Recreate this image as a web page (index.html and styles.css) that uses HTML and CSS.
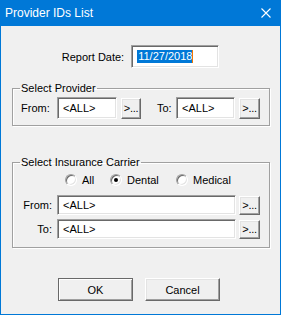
FILE: index.html
```html
<!DOCTYPE html>
<html lang="en">

<head>
    <meta charset="UTF-8">
    <title>Provider IDs List</title>
    <link rel="stylesheet" href="styles.css">
</head>

<body>
    <div class="window">
        <div class="titlebar">
            <span class="title">Provider IDs List</span>
            <svg class="close" width="10" height="10" viewBox="0 0 10 10">
                <path d="M0.5 0.5 L9.5 9.5 M9.5 0.5 L0.5 9.5" stroke="#fff" stroke-width="1.1" fill="none" />
            </svg>
        </div>

        <div class="report">
            <span>Report Date:</span>
            <div class="box date"><span class="sel">11/27/2018</span><span class="caret"></span></div>
        </div>

        <fieldset class="group g1">
            <legend>Select Provider</legend>
            <div class="row">
                <span class="lbl from">From:</span>
                <div class="box pick">&lt;ALL&gt;</div>
                <button class="dots">&gt;...</button>
                <span class="lbl to">To:</span>
                <div class="box pick2">&lt;ALL&gt;</div>
                <button class="dots dots2">&gt;...</button>
            </div>
        </fieldset>

        <fieldset class="group g2">
            <legend>Select Insurance Carrier</legend>
            <div class="radios">
                <label class="radio r-all"><span class="circle"></span>All</label>
                <label class="radio r-dental"><span class="circle on"></span>Dental</label>
                <label class="radio"><span class="circle"></span>Medical</label>
            </div>
            <div class="line">
                <span class="lbl2">From:</span>
                <div class="box wide">&lt;ALL&gt;</div>
                <button class="dots dots3">&gt;...</button>
            </div>
            <div class="line">
                <span class="lbl2">To:</span>
                <div class="box wide">&lt;ALL&gt;</div>
                <button class="dots dots3">&gt;...</button>
            </div>
        </fieldset>

        <div class="actions">
            <button class="btn default">OK</button>
            <button class="btn">Cancel</button>
        </div>
    </div>
</body>

</html>
```

FILE: styles.css
```css
html,
body {
    margin: 0;
    padding: 0;
}

body {
    font-family: "Liberation Sans", Arial, sans-serif;
    font-size: 11px;
    color: #000;
}

.window {
    width: 281px;
    height: 315px;
    box-sizing: border-box;
    border: 1px solid #0078d7;
    border-top: none;
    background-color: #f0f0f0;
    display: flex;
    flex-flow: column;
}

.titlebar {
    height: 26px;
    background-color: #0078d7;
    display: flex;
    align-items: center;
    padding-left: 4px;
    flex-shrink: 0;
}

.title {
    font-family: "Liberation Sans", Arial, sans-serif;
    font-size: 12px;
    color: #fff;
}

.close {
    margin-left: auto;
    margin-right: 9px;
}

/* sunken edit box */
.box {
    box-sizing: border-box;
    background-color: #fff;
    border: 1px solid;
    border-color: #a0a0a0 #fff #fff #a0a0a0;
    box-shadow: inset 1px 1px #696969, inset -1px -1px #e3e3e3;
    padding-left: 5px;
    display: flex;
    align-items: center;
    white-space: nowrap;
}

.report {
    display: flex;
    align-items: center;
    justify-content: center;
    gap: 7px;
    margin-top: 19px;
}

.date {
    width: 88px;
    height: 23px;
    padding-left: 5px;
}

.sel {
    background-color: #0078d7;
    color: #fff;
    line-height: 13px;
    padding-left: 1px;
}

.caret {
    width: 1px;
    height: 13px;
    background-color: #f07800;
}

.group {
    margin: 0 0 0 11px;
    width: 258px;
    box-sizing: border-box;
    border: 1px solid #a0a0a0;
    box-shadow: inset 1px 1px #fff, 1px 1px #fff;
    padding: 2px 0 6px 8px;
    min-width: 0;
}

.group legend {
    padding: 0 1px;
    margin-left: -1px;
    line-height: 13px;
}

.g1 {
    margin-top: 14px;
}

.g2 {
    margin-top: 30px;
    padding-bottom: 8px;
}

.row {
    display: flex;
    align-items: center;
}

.lbl {
    width: 36px;
}

.pick {
    width: 60px;
    height: 22px;
}

.pick2 {
    width: 59px;
    height: 22px;
}

.to {
    width: 19px;
    margin-left: 16px;
}

/* raised push button */
.dots,
.btn {
    box-sizing: border-box;
    font-family: "Liberation Sans", Arial, sans-serif;
    font-size: 11px;
    color: #000;
    background-color: #f0f0f0;
    border: 1px solid;
    border-color: #fff #696969 #696969 #fff;
    box-shadow: inset -1px -1px #a0a0a0, inset 1px 1px #e3e3e3;
    padding: 0;
    margin: 0;
}

.dots {
    width: 20px;
    height: 21px;
    margin-left: 4px;
    letter-spacing: -0.3px;
}

.dots2 {
    width: 21px;
}

.radios {
    display: flex;
    align-items: center;
    margin: 2px 0 0 44px;
    height: 13px;
}

.radio {
    display: flex;
    align-items: center;
    gap: 5px;
}

.r-all {
    width: 45px;
}

.r-dental {
    width: 66px;
}

.circle {
    width: 12px;
    height: 12px;
    box-sizing: border-box;
    border-radius: 50%;
    border: 1px solid;
    border-color: #a0a0a0 #fff #fff #a0a0a0;
    box-shadow: inset 1px 1px #696969, inset -1px -1px #e3e3e3;
    background-color: #fff;
    display: flex;
    align-items: center;
    justify-content: center;
}

.circle.on::after {
    content: "";
    width: 4px;
    height: 4px;
    border-radius: 50%;
    background-color: #000;
}

.line {
    display: flex;
    align-items: center;
    margin-top: 4px;
}

.radios + .line {
    margin-top: 9px;
}

.lbl2 {
    width: 36px;
    text-align: right;
    padding-right: 5px;
    box-sizing: border-box;
}

.wide {
    width: 179px;
    height: 20px;
}

.dots3 {
    width: 21px;
    height: 19px;
    margin-left: 3px;
}

.actions {
    display: flex;
    gap: 12px;
    margin: 30px 0 0 57px;
}

.btn {
    width: 75px;
    height: 23px;
}

.default {
    border-color: #696969;
    box-shadow: inset 1px 1px #fff, inset -1px -1px #a0a0a0;
}
```
